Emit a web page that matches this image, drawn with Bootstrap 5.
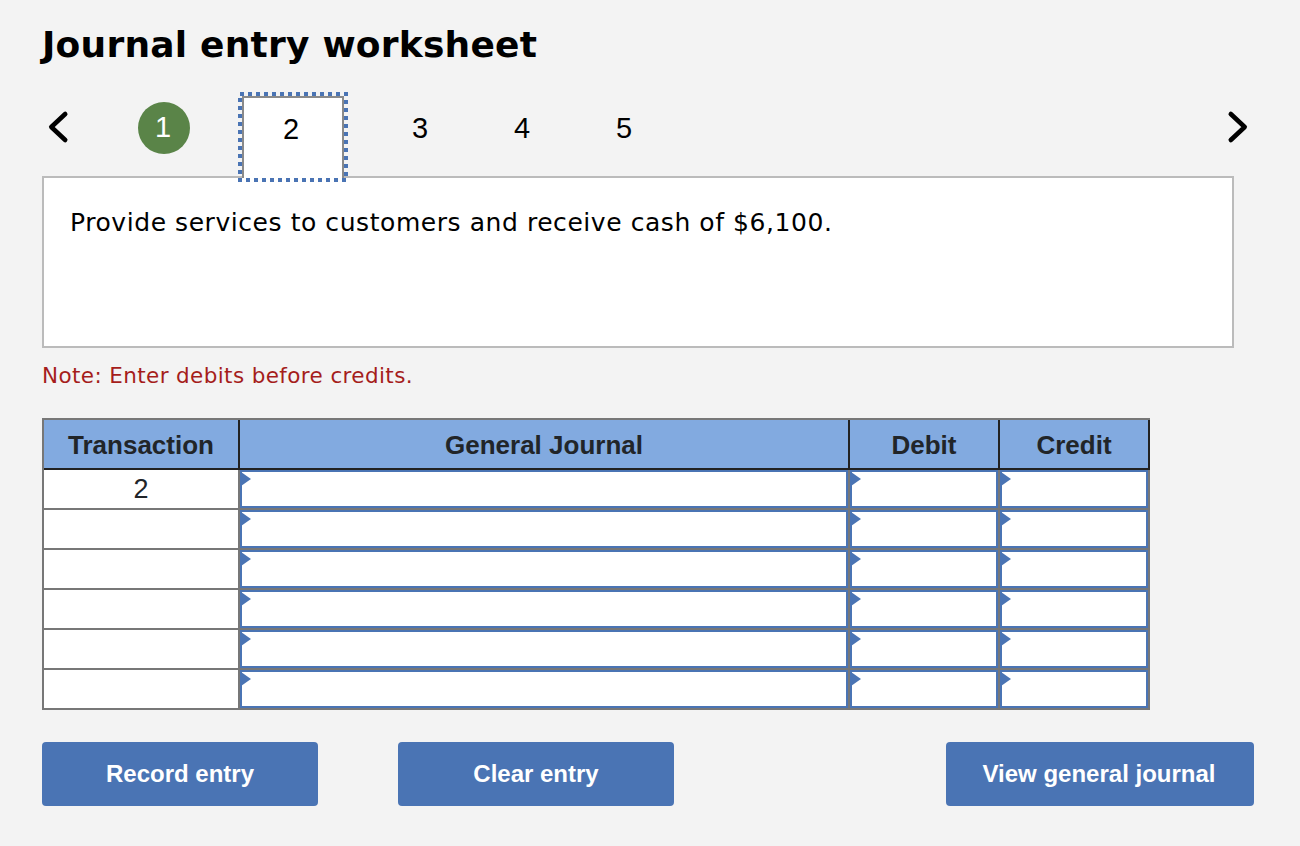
<!DOCTYPE html>
<html lang="en"><head><meta charset="utf-8"><title>Journal entry worksheet</title>
<link href="https://cdn.jsdelivr.net/npm/bootstrap@5.3.0/dist/css/bootstrap.min.css" rel="stylesheet">
<style>
html,body{height:100%}
body{background:#f3f3f3;font-family:"Liberation Sans",Arial,sans-serif;color:#000;overflow:hidden}
.sheet{width:1212px;margin-left:42px;padding-top:23px}
.ttl{font-family:"DejaVu Sans",Verdana,sans-serif;font-weight:700;font-size:36px;letter-spacing:.22px;line-height:44px;margin:0 0 25px;color:#000}
.steps{height:84px;position:relative;z-index:2}
.chev{width:34px;height:36px;display:block}
.chev-prev{margin-right:62px;margin-top:-14px}
.chev-next{margin-top:-14px;margin-right:0}
.done{width:52px;height:52px;border-radius:50%;background:#5a8448;color:#fff;font-size:29px;margin:-12px 48px 0 0;padding-right:2px}
.cur{width:110px;height:90px;position:relative;margin-right:21px;flex:none;align-self:flex-start}
.cur-in{position:absolute;left:4px;right:4px;top:4px;bottom:4px;background:#fff;border:2px solid #8a8a8a;border-bottom:0;font-size:29px;padding:15px 4px 0 0;text-align:center;line-height:32px}
.cur svg{position:absolute;left:0;top:0}
.num{width:102px;font-size:29px;line-height:32px;text-align:center;margin-top:-12px}
.prompt{width:1192px;height:172px;background:#fff;border:2px solid #bbb;padding:27px 26px;font-family:"DejaVu Sans",Verdana,sans-serif;font-size:25px;letter-spacing:.56px;line-height:36px;position:relative}
.note{font-family:"DejaVu Sans",Verdana,sans-serif;font-size:21.5px;letter-spacing:.38px;line-height:28px;color:#a51d1b;margin:14px 0 28px}
.jt{width:1108px;table-layout:fixed;border-collapse:separate;border-spacing:0;border-left:2px solid #777;border-top:2px solid #777;margin:0;background:#fff}
.jt th{background:#82aae0;color:#212529;font-size:26px;font-weight:700;text-align:center;height:50px;padding:1px 0 0;border-right:2px solid #222;border-bottom:2px solid #222;vertical-align:middle;line-height:30px}
.jt td{padding:0;height:40px;background:#fff;border-right:2px solid #777;border-bottom:2px solid #777;font-size:27px;text-align:center;color:#212529;line-height:38px;vertical-align:top}
.fld{height:38px;border:2px solid #4a74b4;background:#fff;position:relative}
.fld::before{content:"";position:absolute;left:-1px;top:0;border-left:10px solid #4a74b4;border-top:7px solid transparent;border-bottom:7px solid transparent}
.acts{margin-top:32px}
.act{background:#4a74b4;border:0;border-radius:4px;color:#fff;font-weight:700;font-size:24px;height:64px;padding:0;--bs-btn-hover-bg:#4a74b4;--bs-btn-hover-color:#fff}
.act-a{width:276px;margin-right:80px}
.act-b{width:276px}
.act-c{width:308px;margin-left:auto;padding-right:2px}
</style></head>
<body>
<div class="sheet">
<h1 class="ttl">Journal entry worksheet</h1>
<div class="steps d-flex align-items-center">
<svg class="chev chev-prev" viewBox="0 0 34 36"><path d="M23.2 5 L9.3 18 L23.2 31" fill="none" stroke="#000" stroke-width="4.6" stroke-linecap="round" stroke-linejoin="round"/></svg>
<div class="done d-flex align-items-center justify-content-center flex-none">1</div>
<div class="cur"><div class="cur-in">2</div><svg width="110" height="90"><rect x="2" y="2" width="106" height="86" fill="none" stroke="#4a74b4" stroke-width="4" stroke-dasharray="4 4"/></svg></div>
<div class="num">3</div><div class="num">4</div><div class="num">5</div>
<svg class="chev chev-next ms-auto" viewBox="0 0 34 36"><path d="M10.8 5 L24.7 18 L10.8 31" fill="none" stroke="#000" stroke-width="4.6" stroke-linecap="round" stroke-linejoin="round"/></svg>
</div>
<div class="prompt">Provide services to customers and receive cash of $6,100.</div>
<p class="note">Note: Enter debits before credits.</p>
<table class="jt">
<colgroup><col style="width:196px"><col style="width:610px"><col style="width:150px"><col style="width:150px"></colgroup>
<thead><tr><th>Transaction</th><th>General Journal</th><th>Debit</th><th>Credit</th></tr></thead>
<tbody>
<tr><td>2</td><td><div class="fld"></div></td><td><div class="fld"></div></td><td><div class="fld"></div></td></tr>
<tr><td></td><td><div class="fld"></div></td><td><div class="fld"></div></td><td><div class="fld"></div></td></tr>
<tr><td></td><td><div class="fld"></div></td><td><div class="fld"></div></td><td><div class="fld"></div></td></tr>
<tr><td></td><td><div class="fld"></div></td><td><div class="fld"></div></td><td><div class="fld"></div></td></tr>
<tr><td></td><td><div class="fld"></div></td><td><div class="fld"></div></td><td><div class="fld"></div></td></tr>
<tr><td></td><td><div class="fld"></div></td><td><div class="fld"></div></td><td><div class="fld"></div></td></tr>
</tbody></table>
<div class="acts d-flex">
<button class="btn act act-a" type="button">Record entry</button>
<button class="btn act act-b" type="button">Clear entry</button>
<button class="btn act act-c" type="button">View general journal</button>
</div>
</div>
<script src="https://cdn.jsdelivr.net/npm/bootstrap@5.3.0/dist/js/bootstrap.bundle.min.js"></script>
</body></html>
